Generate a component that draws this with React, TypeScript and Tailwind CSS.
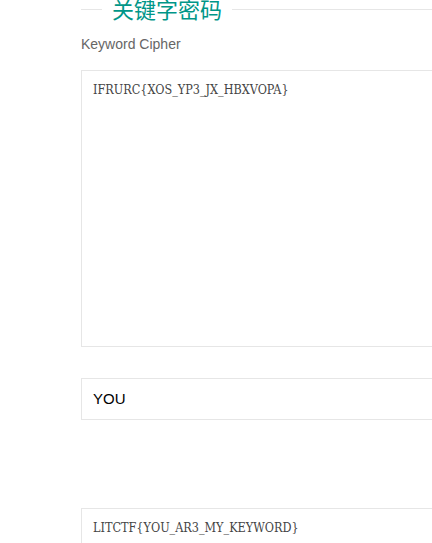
export default function App() {
  const mono = { fontFamily: '"DejaVu Serif", serif', fontStretch: 'condensed' as const };
  return (
    <div className="w-[432px] h-[543px] overflow-hidden bg-white relative" style={{ fontFamily: '"Liberation Sans", Arial, sans-serif' }}>
      <div className="ml-[81px] w-[600px]">
        <div className="border-t border-[#e6e6e6] mt-[9px] h-[20px] relative">
          <span className="absolute left-[21px] top-[-15px] bg-white px-[10px] text-[22px] leading-[26px] text-[#009688]" style={{ fontFamily: '"Noto Sans CJK SC", sans-serif' }}>
            关键字密码
          </span>
        </div>
        <div className="mt-[5px] text-[14px] leading-[20px] text-[#666]">Keyword Cipher</div>
        <div className="mt-[16px] h-[277px] border border-[#e6e6e6] pl-[11px] pt-[9px] text-[12.5px] leading-[20px] text-[#444]" style={mono}>
          IFRURC{'{'}XOS_YP3_JX_HBXVOPA{'}'}
        </div>
        <div className="mt-[31px] h-[42px] border border-[#e6e6e6] pl-[11px] flex items-center text-[15px] text-black">
          YOU
        </div>
        <div className="mt-[88px] h-[80px] border border-[#e6e6e6] pl-[11px] pt-[9px] text-[12.5px] leading-[20px] text-[#444]" style={mono}>
          LITCTF{'{'}YOU_AR3_MY_KEYWORD{'}'}
        </div>
      </div>
    </div>
  );
}
